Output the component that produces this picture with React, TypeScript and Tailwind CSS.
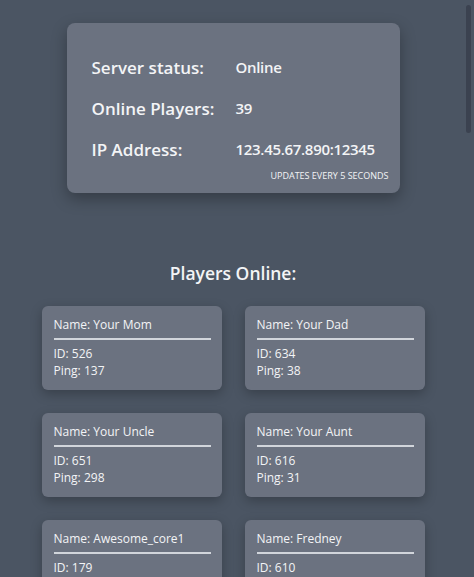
const players = [
  { name: 'Your Mom', id: 526, ping: 137 },
  { name: 'Your Dad', id: 634, ping: 38 },
  { name: 'Your Uncle', id: 651, ping: 298 },
  { name: 'Your Aunt', id: 616, ping: 31 },
  { name: 'Awesome_core1', id: 179, ping: 84 },
  { name: 'Fredney', id: 610, ping: 52 },
  { name: 'Steve', id: 412, ping: 77 },
  { name: 'Alex', id: 388, ping: 45 },
  { name: 'Notch', id: 101, ping: 12 },
  { name: 'Herobrine', id: 666, ping: 999 },
  { name: 'Creeper_42', id: 742, ping: 66 },
  { name: 'Diamond_Dave', id: 233, ping: 104 },
  { name: 'PixelPete', id: 519, ping: 58 },
  { name: 'BlockHead', id: 827, ping: 143 },
  { name: 'EnderGirl', id: 305, ping: 29 },
  { name: 'RedstoneRex', id: 478, ping: 91 },
  { name: 'MinerMike', id: 690, ping: 63 },
  { name: 'Skelly', id: 154, ping: 210 },
  { name: 'ZombieZoe', id: 931, ping: 47 },
  { name: 'Crafty', id: 267, ping: 35 },
  { name: 'NetherNick', id: 588, ping: 121 },
  { name: 'Obsidian', id: 713, ping: 74 },
  { name: 'Pigman', id: 342, ping: 56 },
  { name: 'WitherWill', id: 864, ping: 188 },
  { name: 'Blaze_99', id: 199, ping: 42 },
  { name: 'GhastlyGus', id: 455, ping: 97 },
  { name: 'SlimeKing', id: 623, ping: 33 },
  { name: 'IronGolem', id: 376, ping: 69 },
  { name: 'Villager7', id: 908, ping: 115 },
  { name: 'Torchy', id: 241, ping: 27 },
  { name: 'Lapis', id: 537, ping: 82 },
  { name: 'Emerald_Em', id: 789, ping: 61 },
  { name: 'Cobble', id: 164, ping: 156 },
  { name: 'GravelGrace', id: 402, ping: 39 },
  { name: 'Squidward', id: 655, ping: 73 },
  { name: 'Phantom', id: 318, ping: 248 },
  { name: 'Axolotl', id: 871, ping: 54 },
  { name: 'Sniffer', id: 226, ping: 88 },
  { name: 'Warden', id: 995, ping: 131 },
];

function Row({ label, value }: { label: string; value: string }) {
  return (
    <div className="flex h-[41px] items-center">
      <span className="w-[144px] shrink-0 text-[17px] font-semibold">{label}</span>
      <span className="shrink-0 whitespace-nowrap text-[15px] font-semibold tracking-[-0.02em]">{value}</span>
    </div>
  );
}

export default function App() {
  return (
    <div className="relative">
      <div
        className="h-screen overflow-y-auto bg-[#4b5563] text-[#f3f4f6] [&::-webkit-scrollbar]:hidden"
        style={{ fontFamily: '"Open Sans", sans-serif' }}
      >
        <div className="flex flex-col items-center pt-[23px] pr-2 pb-10">
          <div className="w-[333px] h-[170px] rounded-lg bg-[#6b7280] px-[25px] pt-6 shadow-[0_6px_16px_rgba(0,0,0,0.3)]">
            <Row label="Server status:" value="Online" />
            <Row label="Online Players:" value="39" />
            <Row label="IP Address:" value="123.45.67.890:12345" />
            <div className="-mr-[14px] text-right text-[9px] font-medium leading-3 uppercase">
              Updates every 5 seconds
            </div>
          </div>

          <h2 className="mt-[66px] text-[17.5px] font-semibold leading-7">Players Online:</h2>

          <div className="mt-[19px] grid grid-cols-[180px_180px] gap-[23px]">
            {players.map((p) => (
              <div
                key={p.id}
                className="h-[84px] rounded-md bg-[#6b7280] px-3 pt-[10px] text-[12px] shadow-[0_4px_12px_rgba(0,0,0,0.25)]"
              >
                <p className="leading-[18px]">Name: {p.name}</p>
                <div className="mt-1 mr-[-1px] h-[2px] bg-[#d1d5db]" />
                <p className="mt-[5px] leading-[17px]">ID: {p.id}</p>
                <p className="leading-[17px]">Ping: {p.ping}</p>
              </div>
            ))}
          </div>
        </div>
      </div>
      {/* scrollbar thumb */}
      <div className="pointer-events-none absolute top-[5px] right-[3px] h-[128px] w-[5px] rounded-full bg-[#3b4250]" />
    </div>
  );
}
